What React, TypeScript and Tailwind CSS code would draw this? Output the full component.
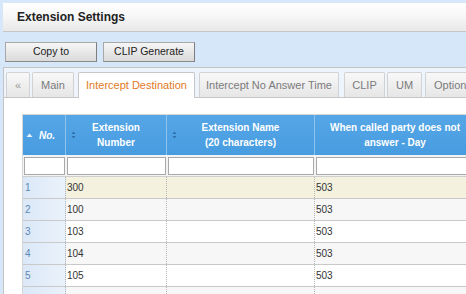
import React from "react";

const rows = [
  { n: 1, ext: "300", name: "", day: "503", bg: "bg-[#f4f1de]" },
  { n: 2, ext: "100", name: "", day: "503", bg: "bg-[#f7f7f7]" },
  { n: 3, ext: "103", name: "", day: "503", bg: "bg-white" },
  { n: 4, ext: "104", name: "", day: "503", bg: "bg-[#f7f7f7]" },
  { n: 5, ext: "105", name: "", day: "503", bg: "bg-white" },
  { n: 6, ext: "", name: "", day: "", bg: "bg-[#f7f7f7]" },
];

function SortBoth() {
  return (
    <svg width="5" height="8" viewBox="0 0 5 8" className="shrink-0">
      <path d="M2.5 0.5 L4.5 3 L0.5 3 Z" fill="#2f6fab" />
      <path d="M2.5 7.5 L4.5 5 L0.5 5 Z" fill="#2f6fab" />
    </svg>
  );
}

function SortUp() {
  return (
    <svg width="7" height="5" viewBox="0 0 7 5" className="shrink-0">
      <path d="M3.5 0.5 L6.5 4 L0.5 4 Z" fill="#e8f3fd" />
    </svg>
  );
}

export default function App() {
  const tabBase =
    "h-[25px] flex items-center justify-center text-[11px] border border-b-0 rounded-t-[2px] whitespace-nowrap overflow-hidden shrink-0";
  const tabIn =
    tabBase + " bg-gradient-to-b from-[#f8f8f8] to-[#e6e6e6] border-[#d2d2d2] text-[#7b7b7b]";
  return (
    <div className="w-[466px] h-[294px] overflow-hidden bg-[#d7e7fa] font-['Liberation_Sans',Arial,sans-serif] pt-[3px]">
      <div className="ml-[3px] h-[29px] border-b border-[#c6c6c6] bg-gradient-to-b from-white via-[#f6f6f6] to-[#e8e8e8] flex items-center pl-[14px] text-[12px] font-bold text-[#222]">
        Extension Settings
      </div>
      <div className="flex pl-[5px] mt-[10px]">
        <div className="w-[92px] h-[20px] flex items-center justify-center text-[10.5px] text-[#222] border border-[#a8a8a8] border-r-[#7d7d7d] border-b-[#8a8a8a] bg-gradient-to-b from-[#f6f6f6] to-[#dadada]">
          Copy to
        </div>
        <div className="ml-[6px] w-[92px] h-[20px] flex items-center justify-center text-[10.5px] text-[#222] border border-[#a8a8a8] border-r-[#7d7d7d] border-b-[#8a8a8a] bg-gradient-to-b from-[#f6f6f6] to-[#dadada]">
          CLIP Generate
        </div>
      </div>
      <div className="ml-[3px] mt-[5px] border-l border-t border-[#c4c4c4] bg-[#eef4fb] h-[300px]">
        <div className="flex pt-[4px] relative z-10 -mb-px">
          <div className={tabIn + " ml-[2px] w-[24px] text-[#999]"}>«</div>
          <div className={tabIn + " ml-[2px] w-[42px]"}>Main</div>
          <div className="ml-[4px] w-[117px] h-[26px] pb-px flex items-center justify-center text-[11px] border border-b-0 border-[#c6c6c6] rounded-t-[2px] bg-white text-[#e27a1e] whitespace-nowrap shrink-0">
            Intercept Destination
          </div>
          <div className={tabIn + " ml-[4px] w-[140px]"}>Intercept No Answer Time</div>
          <div className={tabIn + " ml-[5px] w-[41px]"}>CLIP</div>
          <div className={tabIn + " ml-[2px] w-[35px]"}>UM</div>
          <div className={tabIn + " ml-[3px] w-[60px] justify-start pl-[8px]"}>Option</div>
        </div>
        <div className="border-t border-[#c6c6c6] bg-white h-[220px] pt-[16px] pl-[18px]">
          <div className="border-t border-l border-[#d6d6d6] w-[460px] pt-0">
            {/* header */}
            <div className="grid grid-cols-[43px_101px_148px_160px] h-[40px] bg-gradient-to-b from-[#55a6e6] to-[#479ce0] text-white text-[10px] font-bold leading-[15px]">
              <div className="flex items-center pl-[3px] border-r border-[#8ec4ee]">
                <SortUp />
                <span className="ml-[6px] italic">No.</span>
              </div>
              <div className="relative flex items-center justify-center text-center border-r border-[#8ec4ee]">
                <span className="absolute left-[5px] top-[16px]"><SortBoth /></span>
                <span>Extension<br />Number</span>
              </div>
              <div className="relative flex items-center justify-center text-center border-r border-[#8ec4ee]">
                <span className="absolute left-[5px] top-[16px]"><SortBoth /></span>
                <span>Extension Name<br />(20 characters)</span>
              </div>
              <div className="flex items-center justify-center text-center whitespace-nowrap">
                <span>When called party does not<br />answer - Day</span>
              </div>
            </div>
            {/* filter row */}
            <div className="grid grid-cols-[43px_101px_148px_160px] h-[22px] border-b border-[#cfcfcf] bg-[#f3f3f3]">
              <div className="px-[1px] pt-[2px]"><div className="h-[18px] border border-[#a9a9a9] bg-white" /></div>
              <div className="pl-[1px] pr-[1px] pt-[2px]"><div className="h-[18px] border border-[#a9a9a9] bg-white" /></div>
              <div className="pl-[1px] pr-[1px] pt-[2px]"><div className="h-[18px] border border-[#a9a9a9] bg-white" /></div>
              <div className="pl-[1px] pt-[2px]"><div className="h-[18px] border border-[#a9a9a9] bg-white" /></div>
            </div>
            {rows.map((r) => (
              <div key={r.n} className={"grid grid-cols-[43px_101px_148px_160px] h-[22px] border-b border-[#c9c9c9] text-[10px] " + r.bg}>
                <div className="flex items-center pl-[2px] text-[#5c88b6] bg-gradient-to-r from-[#dbe8f7] to-[#eaf2fb] border-r border-dotted border-[#b5b5b5]">
                  {r.n <= 5 ? r.n : ""}
                </div>
                <div className="flex items-center pl-[1px] text-[#333] border-r border-dotted border-[#b5b5b5]">{r.ext}</div>
                <div className="flex items-center pl-[1px] text-[#333] border-r border-dotted border-[#b5b5b5]">{r.name}</div>
                <div className="flex items-center pl-[1px] text-[#333]">{r.day}</div>
              </div>
            ))}
          </div>
        </div>
      </div>
    </div>
  );
}
